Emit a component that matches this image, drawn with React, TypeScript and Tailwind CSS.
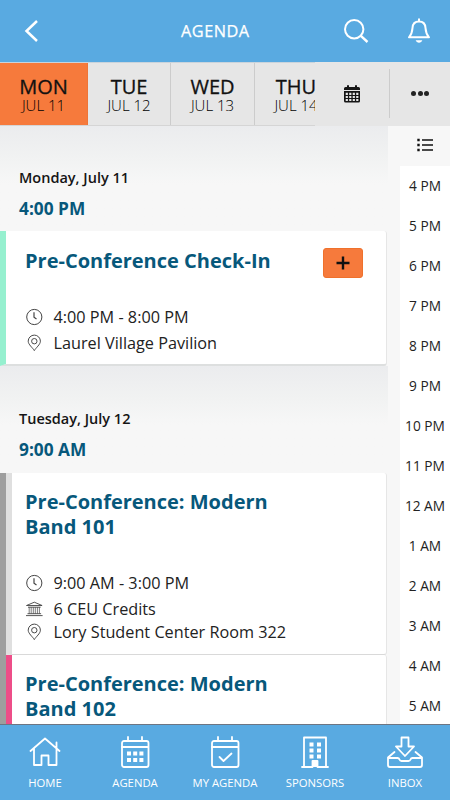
import type { ReactNode } from "react";

const days = [
  { day: "MON", date: "JUL 11", width: "w-[88px]", active: true },
  { day: "TUE", date: "JUL 12", width: "w-[83px]", active: false },
  { day: "WED", date: "JUL 13", width: "w-[84px]", active: false },
  { day: "THU", date: "JUL 14", width: "w-[83px]", active: false },
];

const hours = ["4 PM", "5 PM", "6 PM", "7 PM", "8 PM", "9 PM", "10 PM", "11 PM", "12 AM", "1 AM", "2 AM", "3 AM", "4 AM", "5 AM"];

function ClockIcon() {
  return (
    <svg width="18" height="18" viewBox="0 0 18 18" fill="none" stroke="#444" strokeWidth="1">
      <circle cx="9.300" cy="9" r="7.600" />
      <path d="M9 4.300V9.300L11.500 11" strokeWidth="1.200" />
    </svg>
  );
}

function PinIcon() {
  return (
    <svg width="18" height="18" viewBox="0 0 18 18" fill="none" stroke="#4a4a4a" strokeWidth="1">
      <path d="M9.300 16.600C7.700 13.800 3.200 10.500 3.200 7.200a6.100 6.100 0 0 1 12.200 0c0 3.300-4.500 6.600-6.100 9.400Z" />
      <circle cx="9.300" cy="7.200" r="2.700" />
    </svg>
  );
}

function BankIcon() {
  return (
    <svg width="18" height="18" viewBox="0 0 18 18" fill="none" stroke="#444" strokeWidth="0.900">
      <path d="M1.500 5.500 9.300 2.200l7.800 3.300ZM3 7.200h12.600M2.500 13.700h13.600M1 15.600h16.600" />
      <path d="M4.200 7.200v6.500M6.200 7.200v6.500M8.300 7.200v6.500M10.300 7.200v6.500M12.400 7.200v6.500M14.400 7.200v6.500" strokeWidth="0.700" />
    </svg>
  );
}

function Detail({ icon, children, row }: { icon: ReactNode; children: ReactNode; row: string }) {
  return (
    <div className={`flex items-center gap-[10.5px] text-[16.24px] leading-[22px] text-[#222] ${row}`}>
      {icon}
      <span className="whitespace-nowrap">{children}</span>
    </div>
  );
}

function Heading({ date, time, height }: { date: string; time: string; height: string }) {
  return (
    <div className={`${height} bg-linear-to-b from-[#ebecee] via-[#f1f2f2] via-30% to-[#f7f7f7] to-55% pl-[19px]`}>
      <div className="text-[14.5px] leading-[20px] font-semibold text-[#151515]">{date}</div>
      <div className="mt-[9px] text-[17.3px] leading-[24px] font-bold text-[#07587b]">{time}</div>
    </div>
  );
}

function NavItem({ label, children }: { label: string; children: ReactNode }) {
  return (
    <div className="flex w-[90px] flex-col items-center pt-[8px]">
      <svg width="38" height="38" viewBox="0 0 38 38" fill="none" stroke="white" strokeWidth="1.800" strokeLinejoin="round" strokeLinecap="round">
        {children}
      </svg>
      <span className="mt-[4px] text-[11.3px] leading-[16px] whitespace-nowrap">{label}</span>
    </div>
  );
}

export default function App() {
  return (
    <div className="flex h-[800px] w-[450px] flex-col overflow-hidden bg-[#f7f7f7] font-['Open_Sans',sans-serif]">
      <header className="flex h-[62px] shrink-0 items-center bg-[#59aae1] text-white">
        <svg className="ml-[22px] shrink-0" width="20" height="24" viewBox="0 0 20 24" fill="none" stroke="white" strokeWidth="2.500">
          <path d="M15 2 4.500 12 15 22" />
        </svg>
        <h1 className="ml-[139px] w-[70px] text-[16.3px] leading-[22px] font-medium tracking-[0.5px] whitespace-nowrap [-webkit-text-stroke:0.25px_white]">AGENDA</h1>
        <svg className="ml-[92px] shrink-0" width="26" height="26" viewBox="0 0 26 26" fill="none" stroke="white" strokeWidth="2">
          <circle cx="11.200" cy="11.200" r="9.200" />
          <path d="m17.600 17.600 6.900 6.400" strokeWidth="2.400" />
        </svg>
        <svg className="ml-[37px] shrink-0" width="26" height="26" viewBox="0 0 26 26" fill="none" stroke="white" strokeWidth="2" strokeLinejoin="round">
          <path d="M13 .5v2.800M3 19.300h20c-2.800-3.100-3.300-6-3.500-9.300-.2-4.200-2.800-6.500-6.500-6.500S6.700 5.800 6.500 10c-.2 3.300-.7 6.200-3.500 9.300Z" />
          <path d="M9.700 22.300h6.600c-.8 3.200-5.800 3.200-6.600 0Z" fill="white" stroke="none" />
        </svg>
      </header>

      <div className="flex h-[64px] shrink-0 bg-[#e6e6e6]">
        <div className="flex w-[315px] overflow-hidden border-y border-t-[#cad4dc] border-b-[#d5d5d5]">
          {days.map((d) => (
            <div
              key={d.day}
              className={`${d.width} flex shrink-0 flex-col items-center border-r pt-[13px] ${d.active ? "bg-[#f67a3c] border-[#ee7538]" : "border-[#cccccc]"}`}
            >
              <span className="text-[20px] leading-[22px] font-medium text-[#111] [-webkit-text-stroke:0.3px_#111]">{d.day}</span>
              <span className="text-[15px] leading-[15px] font-light text-black">{d.date}</span>
            </div>
          ))}
        </div>
        <div className="mt-[7px] mb-[8px] flex w-[75px] items-center justify-center border-r border-[#cccccc]">
          <svg width="16" height="18" viewBox="0 0 16 18" fill="#151515">
            <path d="M0 5V3.500Q0 2 1.500 2H3V.3h2V2h6V.3h2V2h1.500Q16 2 16 3.500V5Z" />
            <path fillRule="evenodd" d="M0 6h16v10q0 1.500-1.500 1.500h-13Q0 17.500 0 16ZM1.700 7.800v2.200h2.200V7.800Zm3.500 0v2.200h2.200V7.800Zm3.500 0v2.200h2.200V7.800Zm3.500 0v2.200h2.200V7.800ZM1.700 11v2h2.200v-2Zm3.500 0v2h2.200v-2Zm3.500 0v2h2.200v-2Zm3.500 0v2h2.200v-2ZM1.700 14v2h2.200v-2Zm3.500 0v2h2.200v-2Zm3.500 0v2h2.200v-2Zm3.500 0v2h2.200v-2Z" />
          </svg>
        </div>
        <div className="flex flex-1 items-center justify-center gap-[1.2px] pb-[2px]">
          <i className="size-[5px] rounded-full bg-[#222]" />
          <i className="size-[5px] rounded-full bg-[#222]" />
          <i className="size-[5px] rounded-full bg-[#222]" />
        </div>
      </div>

      <div className="flex h-[598px] shrink-0 overflow-hidden">
        <main className="w-[388px] shrink-0">
          <Heading date="Monday, July 11" time="4:00 PM" height="h-[105px] pt-[42px]" />
          <article className="mr-px h-[135px] rounded-r-[3px] border-r border-b-2 border-l-[6px] border-r-[#e6e6e6] border-b-[#dddfdf] border-l-[#96f0cf] bg-white pl-[19px]">
            <div className="flex h-[71px] justify-between pt-[16.5px] pr-[23px]">
              <h2 className="pt-[0.5px] text-[20px] leading-[25px] font-bold text-[#07587b]">Pre-Conference Check-In</h2>
              <button className="flex h-[30px] w-[40px] items-center justify-center rounded-[3px] border border-[#ef712c] bg-[#f67a3c]">
                <svg width="14" height="14" viewBox="0 0 14 14" stroke="#111" strokeWidth="2.400"><path d="M7 .5v13M.5 7h13" /></svg>
              </button>
            </div>
            <Detail row="mt-[3px] h-[24px]" icon={<ClockIcon />}>4:00 PM - 8:00 PM</Detail>
            <Detail row="mt-[2px] h-[24px]" icon={<PinIcon />}>Laurel Village Pavilion</Detail>
          </article>
          <Heading date="Tuesday, July 12" time="9:00 AM" height="h-[107px] pt-[43px]" />
          <div className="mr-px border-l-[6px] border-[#9e9e9e]">
            <article className="h-[182px] rounded-r-[3px] border-r border-b border-l-[6px] border-r-[#e6e6e6] border-b-[#d9d9d9] border-l-[#dfdfdf] bg-white pt-[16px] pl-[13px]">
              <h2 className="w-[270px] text-[20px] leading-[25px] font-bold text-[#07587b]">Pre-Conference: Modern Band 101</h2>
              <Detail row="mt-[32px] h-[24px]" icon={<ClockIcon />}>9:00 AM - 3:00 PM</Detail>
              <Detail row="mt-[2px] h-[24px]" icon={<BankIcon />}>6 CEU Credits</Detail>
              <Detail row="-mt-px h-[24px]" icon={<PinIcon />}>Lory Student Center Room 322</Detail>
            </article>
            <article className="h-[90px] rounded-r-[3px] border-r border-l-[6px] border-r-[#e6e6e6] border-l-[#ed4d88] bg-white pt-[16px] pl-[13px]">
              <h2 className="w-[270px] text-[20px] leading-[25px] font-bold text-[#07587b]">Pre-Conference: Modern Band 102</h2>
            </article>
          </div>
        </main>
        <aside className="flex flex-1 flex-col pl-[12px]">
          <div className="flex h-[40px] shrink-0 items-center justify-center pb-[3px]">
            <svg width="16" height="14" viewBox="0 0 16 14" stroke="#111" strokeWidth="1.500">
              <path d="M5 2h11M5 7h11M5 12h11" />
              <path d="M.3 2h2.400M.3 7h2.400M.3 12h2.400" strokeWidth="2.400" />
            </svg>
          </div>
          <div className="bg-white">
            {hours.map((h) => (
              <div key={h} className="flex h-[40px] items-center justify-center text-[13.7px] whitespace-nowrap text-[#222]">{h}</div>
            ))}
          </div>
        </aside>
      </div>

      <nav className="flex h-[76px] shrink-0 border-t border-t-[#6d7582] bg-[#59aae1] text-white">
        <NavItem label="HOME">
          <path d="m4.500 18 14.500-12.500L33.500 18M8 15.500v16.500h7.500V22.500h7V32H30.500V15.500M30.500 15V9.500" />
        </NavItem>
        <NavItem label="AGENDA">
          <rect x="6" y="8" width="26.500" height="26" rx="2" />
          <path d="M6 14h26M12 4v4M26 4v4" />
          <path d="M11 18.500h4v4h-4zM17.200 18.500h4v4h-4zM23.400 18.500h4v4h-4zM11 25h4v4h-4zM17.200 25h4v4h-4zM23.400 25h4v4h-4z" fill="white" stroke="none" />
        </NavItem>
        <NavItem label="MY AGENDA">
          <rect x="6" y="8" width="26.500" height="26" rx="2" />
          <path d="M6 14h26M12 4v4M26 4v4M13.500 24l4 4 8-7.500" />
        </NavItem>
        <NavItem label="SPONSORS">
          <path d="M8 34V4.500h22V34M6 34h10.500v-6h5v6H32" />
          <path d="M13.500 9.500h4v4h-4zM21 9.500h4v4h-4zM13.500 15.500h4v4h-4zM21 15.500h4v4h-4zM13.500 21.500h4v4h-4zM21 21.500h4v4h-4zM17 28h4.500v6H17z" fill="white" stroke="none" />
        </NavItem>
        <NavItem label="INBOX">
          <path d="M15.500 4.500h7v9h5.500L19 23 10 13.500h5.500ZM8.500 19 2 24.500V32q0 2 2 2h30q2 0 2-2v-7.500L29.500 19M2.500 25h9q1.500 0 2 1.500t2 1.500h7q1.500 0 2-1.500t2-1.500h9" />
        </NavItem>
      </nav>
    </div>
  );
}
